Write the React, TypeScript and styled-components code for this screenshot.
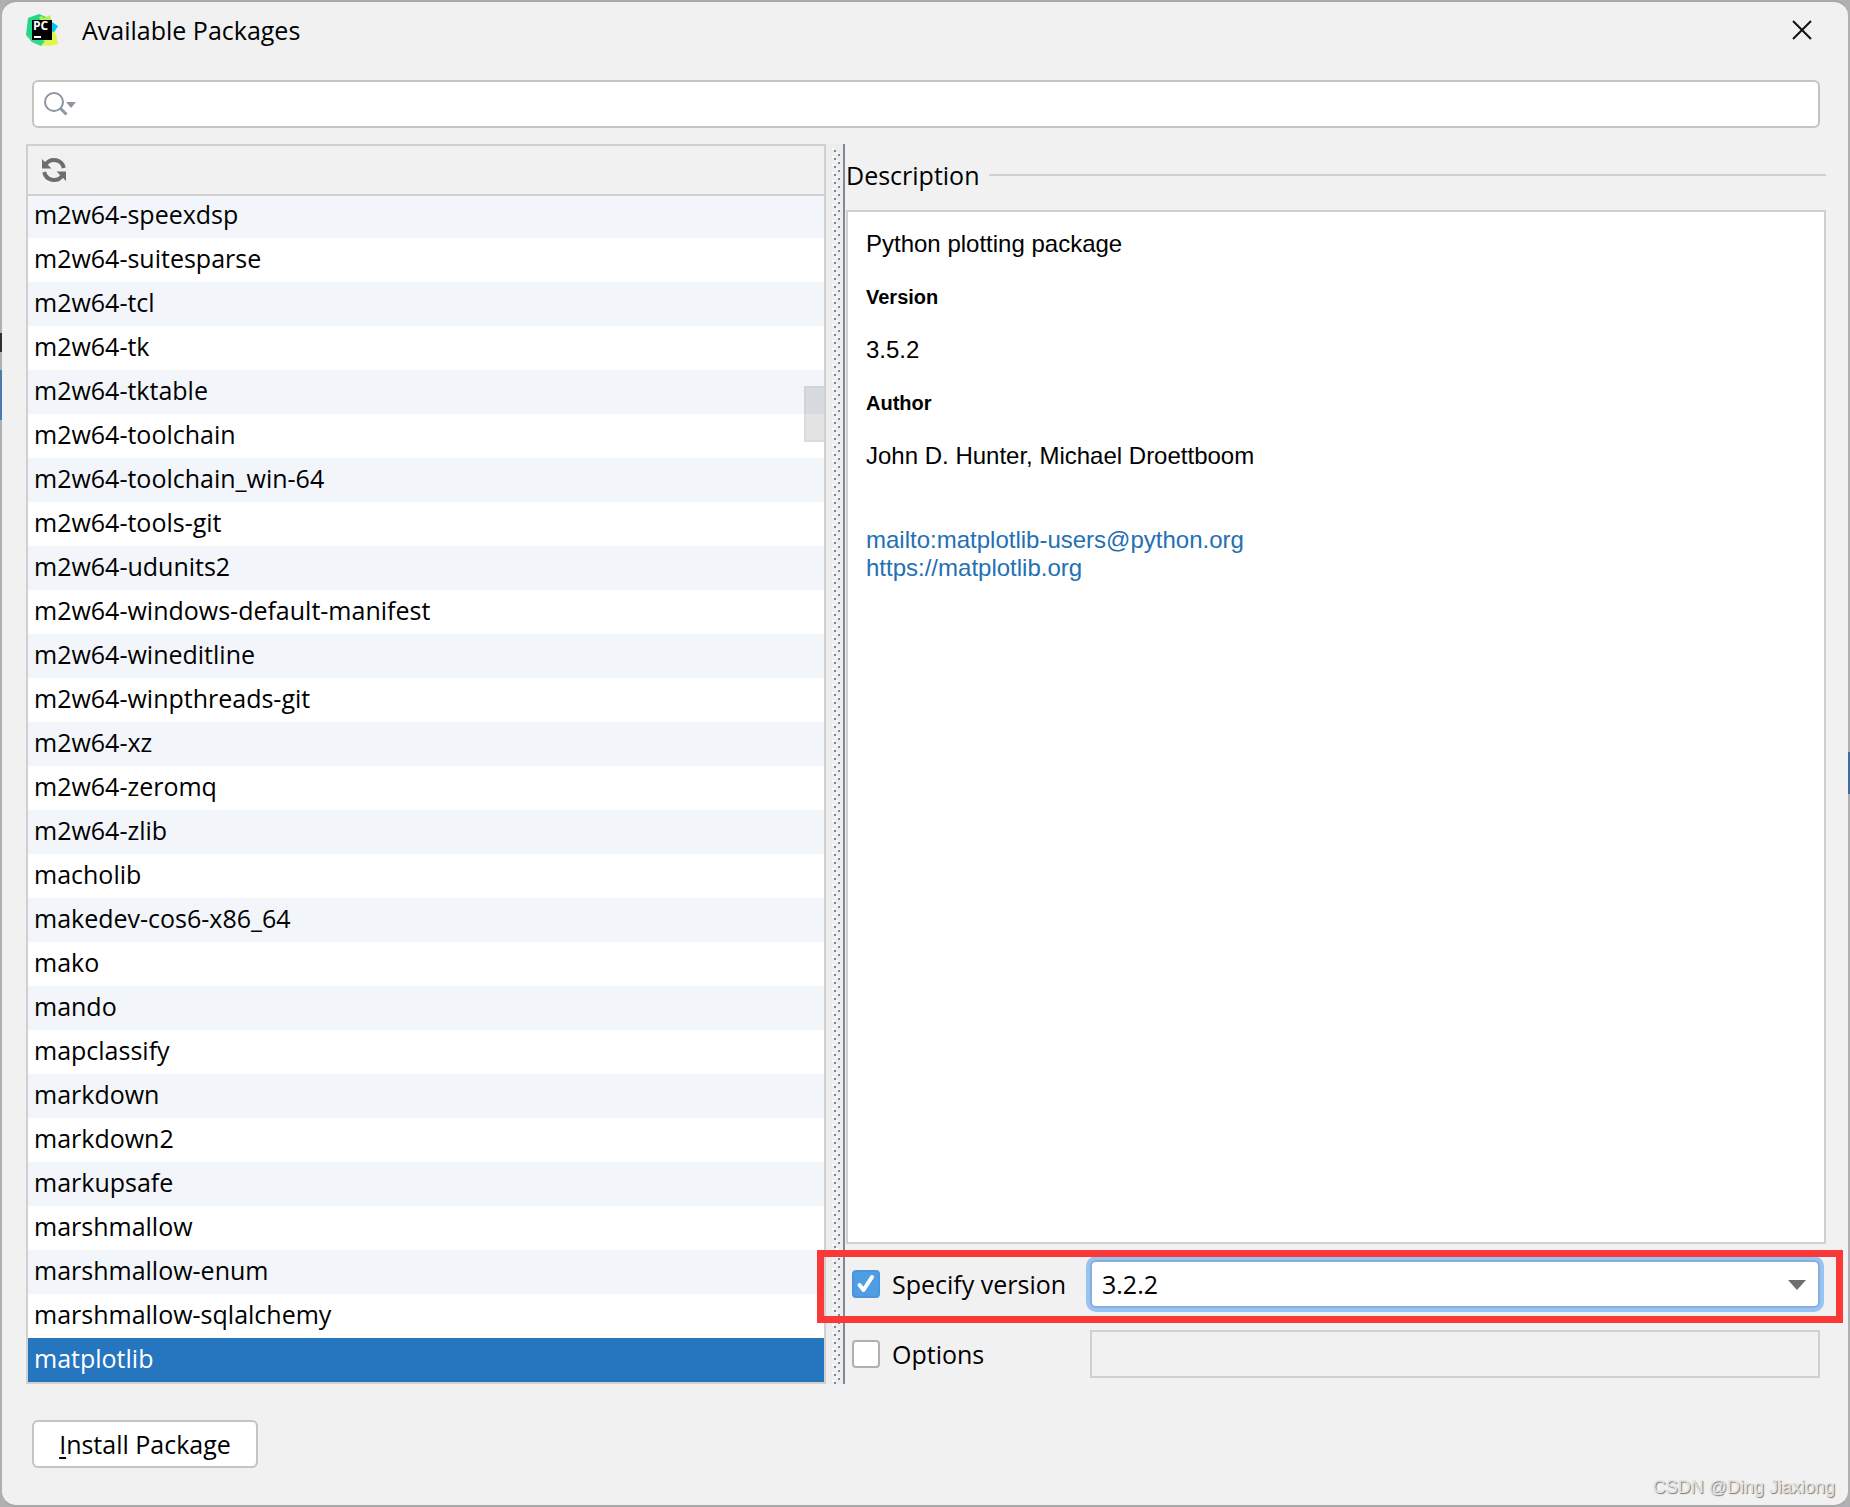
import React, { useState } from "react";
import styled, { createGlobalStyle } from "styled-components";

const uiFont = `"Open Sans", "Noto Sans", sans-serif`;
const docFont = `"Liberation Sans", Arial, sans-serif`;

const GlobalStyle = createGlobalStyle`
  * { box-sizing: border-box; }
  body {
    margin: 0;
    background:
      linear-gradient(#2c2f36, #2c2f36) 0 333px / 2px 19px no-repeat,
      linear-gradient(#4a7aae, #4a7aae) 0 370px / 2px 50px no-repeat,
      linear-gradient(#3f6c9c, #3f6c9c) 100% 752px / 2px 42px no-repeat,
      #b0b0b2;
    color: #000;
    font-family: ${uiFont};
    font-size: 25px;
    line-height: 44px;
  }
  button, input, select { font: inherit; color: inherit; margin: 0; }
`;

const Dialog = styled.main`
  position: relative;
  display: flex;
  flex-direction: column;
  min-height: 100vh;
  padding: 0 22px 37px 24px;
  border: 2px solid #a9a9a9;
  border-left-color: transparent;
  border-right-color: transparent;
  border-radius: 16px;
  background: #f1f1f1;
  background-clip: padding-box;
`;

const TitleBar = styled.header`
  display: flex;
  align-items: center;
  height: 56px;
  padding-right: 10px;
`;

const Title = styled.h1`
  flex: 1;
  margin: 0 0 0 24px;
  font-size: 25px;
  font-weight: 400;
`;

const CloseButton = styled.button`
  display: flex;
  align-items: center;
  justify-content: center;
  width: 28px;
  height: 28px;
  padding: 0;
  border: 0;
  background: none;
`;

const SearchBox = styled.label`
  display: flex;
  align-items: center;
  height: 48px;
  margin: 22px 6px 16px;
  padding-left: 10px;
  border: 2px solid #c4c4c4;
  border-radius: 6px;
  background: #fff;
`;

const SearchInput = styled.input`
  flex: 1;
  min-width: 0;
  border: 0;
  outline: 0;
  padding: 0 8px;
  background: none;
`;

const Split = styled.div`
  display: grid;
  grid-template-columns: 800px 20px minmax(0, 1fr);
  flex: 1;
`;

const ListPanel = styled.section`
  position: relative;
  display: flex;
  flex-direction: column;
  border: 2px solid #d0d0d0;
  background: #fff;
`;

const Toolbar = styled.div`
  display: flex;
  align-items: center;
  flex: none;
  height: 50px;
  padding-left: 12px;
  border-bottom: 2px solid #d0d0d0;
  background: #f1f1f1;
`;

const ToolButton = styled.button`
  display: flex;
  padding: 0;
  border: 0;
  background: none;
`;

const PackageList = styled.ul`
  display: flex;
  flex-direction: column;
  justify-content: flex-end;
  flex: 1 1 0px;
  min-height: 0;
  margin: 0;
  padding: 0;
  overflow: hidden;
  list-style: none;
`;

const PackageRow = styled.li<{ $selected: boolean }>`
  flex: none;
  height: 44px;
  padding-left: 6px;
  line-height: 40px;
  white-space: nowrap;
  color: ${(p) => (p.$selected ? "#fff" : "#000")};
  &:nth-child(odd) { background: #f2f5fa; }
  && { ${(p) => (p.$selected ? "background: #2675bf;" : "")} }
`;

const ScrollThumb = styled.div`
  position: absolute;
  top: 240px;
  right: 0;
  width: 20px;
  height: 56px;
  border: 2px solid rgba(0, 0, 0, 0.03);
  border-right: 0;
  background: rgba(0, 0, 0, 0.11);
`;

const Divider = styled.div`
  display: flex;
  padding: 0 1px 0 2px;
  background: linear-gradient(#ededed, #ededed) 0 0 / 17px 100% no-repeat;
`;

const GripSvg = styled.svg`
  flex: 1;
  width: 15px;
  height: 100%;
`;

const DividerLine = styled.div`
  width: 2px;
  background: #7a8a99;
`;

const Details = styled.section`
  display: flex;
  flex-direction: column;
  min-width: 0;
`;

const GroupHeader = styled.h2`
  display: flex;
  align-items: center;
  gap: 10px;
  height: 62px;
  margin: 0 0 4px;
  font-size: 25px;
  font-weight: 400;
  &::after {
    content: "";
    flex: 1;
    height: 2px;
    background: #d0d0d0;
  }
`;

const Description = styled.article`
  flex: 1;
  padding: 18px;
  border: 2px solid #d0d0d0;
  background: #fff;
  font-family: ${docFont};
  font-size: 24px;
  line-height: 28px;
`;

const Paragraph = styled.p`
  margin: 0 0 25px;
`;

const Heading = styled.h3`
  margin: 0 0 25px;
  font-size: 20px;
`;

const Links = styled.div`
  display: flex;
  flex-direction: column;
  align-items: flex-start;
  margin-top: 56px;
`;

const Link = styled.a`
  color: #2470b3;
  text-decoration: none;
`;

const Form = styled.form`
  display: grid;
  grid-template-columns: 238px minmax(0, 1fr);
  row-gap: 22px;
  padding: 16px 6px 6px;
`;

const CheckLabel = styled.label`
  display: flex;
  align-items: center;
  gap: 12px;
  white-space: nowrap;
`;

const CheckBox = styled.input`
  appearance: none;
  flex: none;
  width: 28px;
  height: 28px;
  border: 2px solid #b0b0b0;
  border-radius: 4px;
  background: #fff;
  &:checked {
    border-color: #4a95dc;
    background: #4f9ee3 url("data:image/svg+xml,%3Csvg xmlns='http://www.w3.org/2000/svg' viewBox='0 0 24 24'%3E%3Cpath d='M5.5 13l4 5L18 5' fill='none' stroke='white' stroke-width='4' stroke-linecap='round' stroke-linejoin='round'/%3E%3C/svg%3E") center / 24px 24px no-repeat;
  }
`;

const ComboWrap = styled.div`
  position: relative;
  display: flex;
`;

const Combo = styled.select`
  appearance: none;
  width: 100%;
  height: 48px;
  padding: 0 10px;
  border: 2px solid #87afda;
  border-radius: 6px;
  outline: 0;
  background: #fff;
  box-shadow: 0 0 0 4px #97c3f3;
  line-height: 44px;
`;

const ComboArrow = styled.svg`
  position: absolute;
  top: 20px;
  right: 14px;
  pointer-events: none;
`;

const OptionsInput = styled.input`
  width: 100%;
  height: 48px;
  padding: 0 10px;
  border: 2px solid #d0d0d0;
  background: #f1f1f1;
`;

const Highlight = styled.div`
  position: absolute;
  right: 5px;
  bottom: 182px;
  left: 815px;
  height: 73px;
  border: 7px solid #fb3838;
  pointer-events: none;
`;

const Footer = styled.footer`
  display: flex;
  padding: 36px 6px 0;
`;

const InstallButton = styled.button`
  width: 226px;
  height: 48px;
  padding: 0;
  border: 2px solid #c4c4c4;
  border-radius: 6px;
  background: #fff;
  line-height: 44px;
`;

const Mnemonic = styled.span`
  text-decoration: underline;
  text-decoration-thickness: 2px;
  text-underline-offset: 3px;
`;

const Watermark = styled.span`
  position: absolute;
  right: 13px;
  bottom: 4px;
  font-family: ${docFont};
  font-size: 18px;
  line-height: 28px;
  color: #e4e4e4;
  text-shadow: 1px 1px 1px #777;
`;

const packages = [
  "m2w64-speexdsp", "m2w64-suitesparse", "m2w64-tcl", "m2w64-tk", "m2w64-tktable",
  "m2w64-toolchain", "m2w64-toolchain_win-64", "m2w64-tools-git", "m2w64-udunits2",
  "m2w64-windows-default-manifest", "m2w64-wineditline", "m2w64-winpthreads-git",
  "m2w64-xz", "m2w64-zeromq", "m2w64-zlib", "macholib", "makedev-cos6-x86_64", "mako",
  "mando", "mapclassify", "markdown", "markdown2", "markupsafe", "marshmallow",
  "marshmallow-enum", "marshmallow-sqlalchemy", "matplotlib",
];

const PyCharmIcon = () => (
  <svg width="32" height="32" viewBox="0 0 32 32" aria-hidden="true">
    <path d="M2 4L13 0l9 4 2 12-8 14-10-2-6-7z" fill="#21d789" />
    <path d="M13 3l3-1 2 2 6-3 2 9-6 6z" fill="#b8f04a" />
    <path d="M26 8l6 4-5 8-4-5z" fill="#07c3f2" />
    <path d="M26 17l4 3 2 10-9 2-12-1-6-6 6-5z" fill="#e2f64a" />
    <path d="M0 20l6 8 9 4 4-5z" fill="#2fdc8e" />
    <rect x="6" y="6" width="20" height="20" fill="#000" />
    <text x="7" y="16" fontFamily="Open Sans, sans-serif" fontSize="12" fontWeight="700" fill="#fff">PC</text>
    <rect x="8" y="22" width="7" height="2" fill="#fff" />
  </svg>
);

const CloseIcon = () => (
  <svg width="20" height="20" viewBox="0 0 20 20" aria-hidden="true">
    <path d="M1 1l18 18M19 1L1 19" stroke="#111" strokeWidth="2" />
  </svg>
);

const SearchIcon = () => (
  <svg width="32" height="24" viewBox="0 0 32 24" aria-hidden="true">
    <circle cx="10" cy="10" r="9" fill="none" stroke="#8c96a0" strokeWidth="2" />
    <path d="M16.5 16.5l6 6" stroke="#8c96a0" strokeWidth="3" />
    <path d="M22 10h10l-5 6z" fill="#8c96a0" />
  </svg>
);

const RefreshIcon = () => (
  <svg width="28" height="28" viewBox="0 0 28 28" aria-hidden="true">
    <path d="M6 8A10 10 0 0 1 23.8 12M22 20A10 10 0 0 1 4.2 16" fill="none" stroke="#6e6e6e" strokeWidth="4" />
    <path d="M2 3v9.5h9.5z" fill="#6e6e6e" />
    <path d="M26 25v-9.5h-9.5z" fill="#6e6e6e" />
  </svg>
);

const Grip = () => (
  <GripSvg aria-hidden="true">
    <defs>
      <pattern id="grip" x="4" y="4" width="8" height="8" patternUnits="userSpaceOnUse">
        <path d="M0 0h2v2H0zM4 4h2v2H4z" fill="#fff" />
        <path d="M2 2h2v2H2zM6 6h2v2H6z" fill="#7a8a99" />
      </pattern>
    </defs>
    <rect x="4" y="4" width="8" height="100%" fill="url(#grip)" />
  </GripSvg>
);

export default function App() {
  const [selected, setSelected] = useState("matplotlib");
  const [specify, setSpecify] = useState(true);
  const [options, setOptions] = useState(false);

  return (
    <>
      <GlobalStyle />
      <Dialog>
        <TitleBar>
          <PyCharmIcon />
          <Title>Available Packages</Title>
          <CloseButton type="button" aria-label="Close"><CloseIcon /></CloseButton>
        </TitleBar>
        <SearchBox>
          <SearchIcon />
          <SearchInput type="text" aria-label="Search packages" />
        </SearchBox>
        <Split>
          <ListPanel>
            <Toolbar>
              <ToolButton type="button" aria-label="Reload packages"><RefreshIcon /></ToolButton>
            </Toolbar>
            <PackageList>
              {packages.map((name) => (
                <PackageRow key={name} $selected={name === selected} onClick={() => setSelected(name)}>
                  {name}
                </PackageRow>
              ))}
            </PackageList>
            <ScrollThumb />
          </ListPanel>
          <Divider>
            <Grip />
            <DividerLine />
          </Divider>
          <Details>
            <GroupHeader>Description</GroupHeader>
            <Description>
              <Paragraph>Python plotting package</Paragraph>
              <Heading>Version</Heading>
              <Paragraph>3.5.2</Paragraph>
              <Heading>Author</Heading>
              <Paragraph>John D. Hunter, Michael Droettboom</Paragraph>
              <Links>
                <Link href="mailto:matplotlib-users@python.org">mailto:matplotlib-users@python.org</Link>
                <Link href="https://matplotlib.org">https://matplotlib.org</Link>
              </Links>
            </Description>
            <Form>
              <CheckLabel>
                <CheckBox type="checkbox" checked={specify} onChange={() => setSpecify(!specify)} />
                Specify version
              </CheckLabel>
              <ComboWrap>
                <Combo aria-label="Version" defaultValue="3.2.2">
                  <option>3.2.2</option>
                </Combo>
                <ComboArrow width="18" height="10" viewBox="0 0 18 10" aria-hidden="true">
                  <path d="M0 0h18L9 10z" fill="#6e6e6e" />
                </ComboArrow>
              </ComboWrap>
              <CheckLabel>
                <CheckBox type="checkbox" checked={options} onChange={() => setOptions(!options)} />
                Options
              </CheckLabel>
              <OptionsInput type="text" aria-label="Options value" disabled={!options} />
            </Form>
          </Details>
        </Split>
        <Footer>
          <InstallButton type="button"><Mnemonic>I</Mnemonic>nstall Package</InstallButton>
        </Footer>
        <Highlight />
        <Watermark>CSDN @Ding Jiaxiong</Watermark>
      </Dialog>
    </>
  );
}
